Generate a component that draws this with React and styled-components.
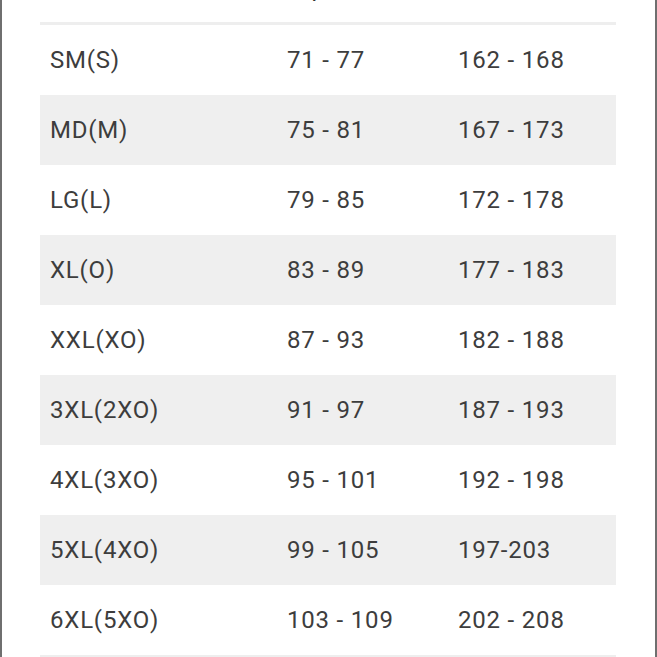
import React from 'react';
import styled, {createGlobalStyle} from 'styled-components';

const GlobalStyle = createGlobalStyle`
  html, body {
    margin: 0;
    padding: 0;
    background: #fff;
  }
  body {
    font-family: Roboto, "Noto Sans", Arial, sans-serif;
    overflow: hidden;
  }
`;

const Frame = styled.div`
  box-sizing: border-box;
  width: 657px;
  height: 657px;
  overflow: hidden;
  border-left: 2px solid #6f6f6f;
  border-right: 2px solid #6f6f6f;
  padding: 0 39px 0 38px;
  background: #fff;
`;

const Table = styled.div`
  display: flex;
  flex-direction: column;
  border-bottom: 3px solid #eeeeee;
`;

const Row = styled.div`
  display: grid;
  grid-template-columns: 237px 171px 1fr;
  align-items: center;
  height: ${p => (p.$head ? '48px' : '70px')};
  margin-top: ${p => (p.$head ? '-26px' : '0')};
  background: ${p => (p.$shade ? '#efefef' : '#fff')};
  border-bottom: ${p => (p.$head ? '3px solid #eeeeee' : 'none')};
`;

const Cell = styled.div`
  padding-left: 10px;
  font-size: 24px;
  line-height: 24px;
  letter-spacing: 0.8px;
  color: #3d3d3d;
  white-space: nowrap;
`;

const HeadCell = styled(Cell)`
  align-self: start;
  padding-top: 2px;
  color: #333;
`;

const sizes = [
  ['SM(S)', '71 - 77', '162 - 168'],
  ['MD(M)', '75 - 81', '167 - 173'],
  ['LG(L)', '79 - 85', '172 - 178'],
  ['XL(O)', '83 - 89', '177 - 183'],
  ['XXL(XO)', '87 - 93', '182 - 188'],
  ['3XL(2XO)', '91 - 97', '187 - 193'],
  ['4XL(3XO)', '95 - 101', '192 - 198'],
  ['5XL(4XO)', '99 - 105', '197-203'],
  ['6XL(5XO)', '103 - 109', '202 - 208'],
];

export default function App() {
  return (
    <>
      <GlobalStyle />
      <Frame>
        <Table>
          <Row $head>
            <HeadCell>Size</HeadCell>
            <HeadCell>Hip</HeadCell>
            <HeadCell>Waist</HeadCell>
          </Row>
          {sizes.map((item, i) => (
            <Row key={item[0]} $shade={i % 2 === 1}>
              <Cell>{item[0]}</Cell>
              <Cell>{item[1]}</Cell>
              <Cell>{item[2]}</Cell>
            </Row>
          ))}
        </Table>
      </Frame>
    </>
  );
}
